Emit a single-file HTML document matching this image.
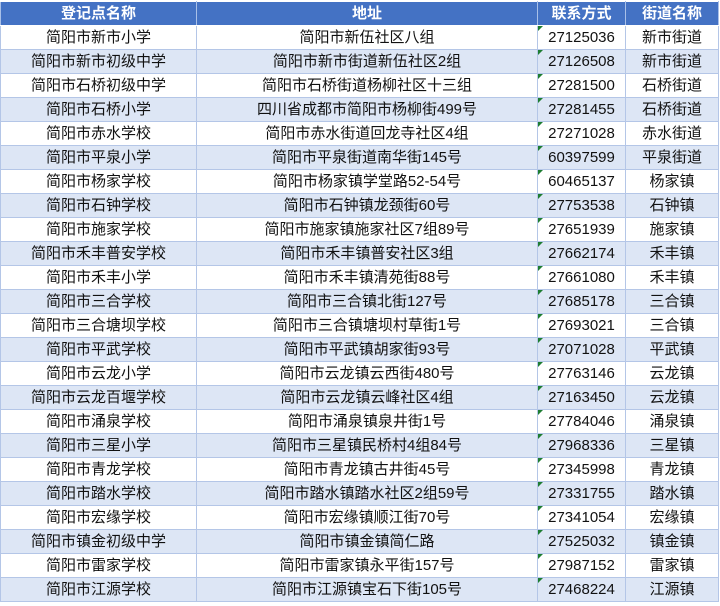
<!DOCTYPE html>
<html><head><meta charset="utf-8"><style>
body{margin:0;background:#fff;width:720px;height:606px;overflow:hidden}
table{position:absolute;left:0;top:1px;border-collapse:collapse;table-layout:fixed;font-family:"Liberation Sans","Noto Sans CJK SC",sans-serif;font-size:15px;color:#111}
td,th{height:23px;padding:0;text-align:center;border:1px solid #b4c6e7;white-space:nowrap;overflow:hidden;line-height:23px}
th{background:#4472c4;color:#fff;font-weight:bold;border-color:#fff #a9c0e8;height:23px}
tr:nth-child(odd) td{background:#dde6f5}
td.n{position:relative}
td.n::before{content:"";position:absolute;left:0;top:0;border-top:5px solid #1e7d32;border-right:5px solid transparent}
</style></head><body>
<table>
<colgroup><col style="width:196px"><col style="width:341px"><col style="width:88px"><col style="width:93px"></colgroup>
<tr><th>登记点名称</th><th>地址</th><th>联系方式</th><th>街道名称</th></tr>
<tr><td>简阳市新市小学</td><td>简阳市新伍社区八组</td><td class="n">27125036</td><td>新市街道</td></tr>
<tr><td>简阳市新市初级中学</td><td>简阳市新市街道新伍社区2组</td><td class="n">27126508</td><td>新市街道</td></tr>
<tr><td>简阳市石桥初级中学</td><td>简阳市石桥街道杨柳社区十三组</td><td class="n">27281500</td><td>石桥街道</td></tr>
<tr><td>简阳市石桥小学</td><td>四川省成都市简阳市杨柳街499号</td><td class="n">27281455</td><td>石桥街道</td></tr>
<tr><td>简阳市赤水学校</td><td>简阳市赤水街道回龙寺社区4组</td><td class="n">27271028</td><td>赤水街道</td></tr>
<tr><td>简阳市平泉小学</td><td>简阳市平泉街道南华街145号</td><td class="n">60397599</td><td>平泉街道</td></tr>
<tr><td>简阳市杨家学校</td><td>简阳市杨家镇学堂路52-54号</td><td class="n">60465137</td><td>杨家镇</td></tr>
<tr><td>简阳市石钟学校</td><td>简阳市石钟镇龙颈街60号</td><td class="n">27753538</td><td>石钟镇</td></tr>
<tr><td>简阳市施家学校</td><td>简阳市施家镇施家社区7组89号</td><td class="n">27651939</td><td>施家镇</td></tr>
<tr><td>简阳市禾丰普安学校</td><td>简阳市禾丰镇普安社区3组</td><td class="n">27662174</td><td>禾丰镇</td></tr>
<tr><td>简阳市禾丰小学</td><td>简阳市禾丰镇清苑街88号</td><td class="n">27661080</td><td>禾丰镇</td></tr>
<tr><td>简阳市三合学校</td><td>简阳市三合镇北街127号</td><td class="n">27685178</td><td>三合镇</td></tr>
<tr><td>简阳市三合塘坝学校</td><td>简阳市三合镇塘坝村草街1号</td><td class="n">27693021</td><td>三合镇</td></tr>
<tr><td>简阳市平武学校</td><td>简阳市平武镇胡家街93号</td><td class="n">27071028</td><td>平武镇</td></tr>
<tr><td>简阳市云龙小学</td><td>简阳市云龙镇云西街480号</td><td class="n">27763146</td><td>云龙镇</td></tr>
<tr><td>简阳市云龙百堰学校</td><td>简阳市云龙镇云峰社区4组</td><td class="n">27163450</td><td>云龙镇</td></tr>
<tr><td>简阳市涌泉学校</td><td>简阳市涌泉镇泉井街1号</td><td class="n">27784046</td><td>涌泉镇</td></tr>
<tr><td>简阳市三星小学</td><td>简阳市三星镇民桥村4组84号</td><td class="n">27968336</td><td>三星镇</td></tr>
<tr><td>简阳市青龙学校</td><td>简阳市青龙镇古井街45号</td><td class="n">27345998</td><td>青龙镇</td></tr>
<tr><td>简阳市踏水学校</td><td>简阳市踏水镇踏水社区2组59号</td><td class="n">27331755</td><td>踏水镇</td></tr>
<tr><td>简阳市宏缘学校</td><td>简阳市宏缘镇顺江街70号</td><td class="n">27341054</td><td>宏缘镇</td></tr>
<tr><td>简阳市镇金初级中学</td><td>简阳市镇金镇简仁路</td><td class="n">27525032</td><td>镇金镇</td></tr>
<tr><td>简阳市雷家学校</td><td>简阳市雷家镇永平街157号</td><td class="n">27987152</td><td>雷家镇</td></tr>
<tr><td>简阳市江源学校</td><td>简阳市江源镇宝石下街105号</td><td class="n">27468224</td><td>江源镇</td></tr>
</table>
</body></html>
